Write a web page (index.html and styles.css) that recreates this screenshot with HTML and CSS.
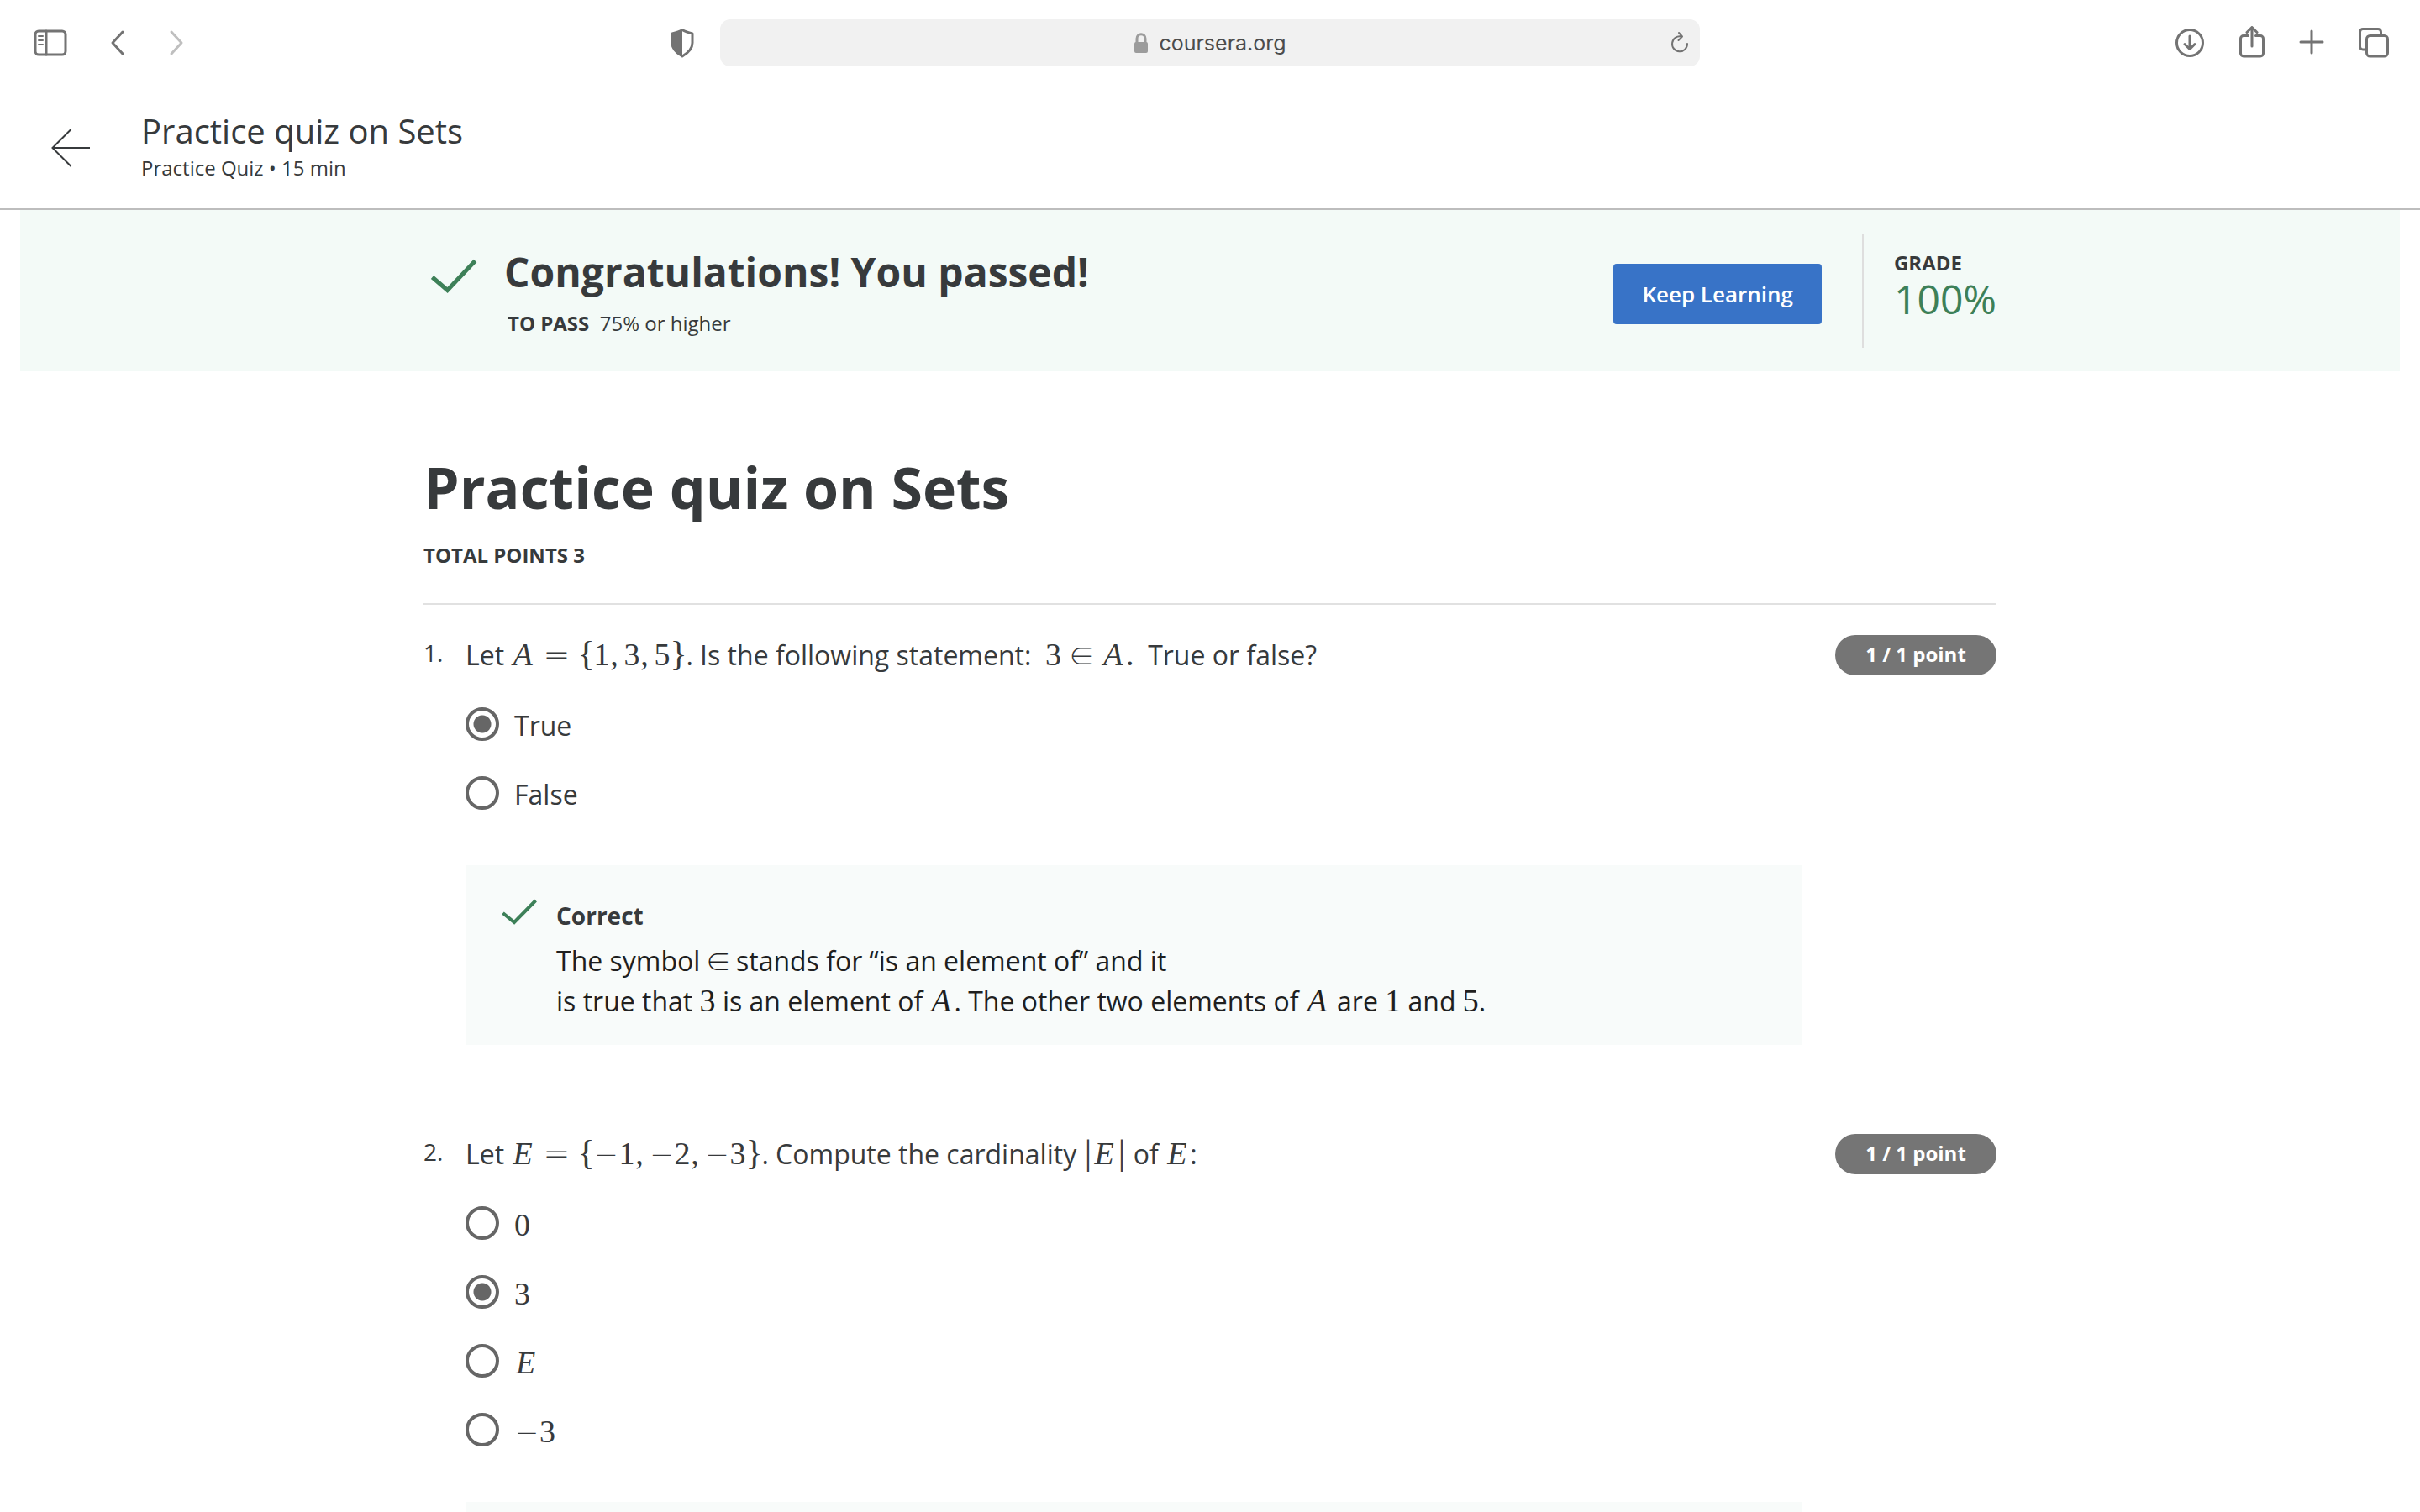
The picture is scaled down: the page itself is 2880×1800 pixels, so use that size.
FILE: index.html
```html
<!DOCTYPE html>
<html lang="en">
<head>
<meta charset="utf-8">
<title>Practice quiz on Sets</title>
<link rel="stylesheet" href="styles.css">
</head>
<body>
<div class="toolbar">
  <div class="tools tools-left">
    <button class="tool" aria-label="Sidebar"><svg width="40" height="32" viewBox="0 0 40 32"><rect x="2" y="2" width="36" height="28" rx="4"/><path d="M15 2v28"/><path class="thin" d="M6 8h5M6 13h5M6 18h5"/></svg></button>
    <button class="tool" aria-label="Back"><svg width="20" height="32" viewBox="0 0 20 32"><path d="M16 3L4 16l12 13"/></svg></button>
    <button class="tool" aria-label="Forward" disabled><svg width="20" height="32" viewBox="0 0 20 32"><path d="M4 3l12 13L4 29"/></svg></button>
    <button class="tool shield" aria-label="Privacy report"><svg width="30" height="36" viewBox="0 0 30 36"><path d="M15 2.500C11 5 7 6 3 7V18c0 7 5 12 12 16 7-4 12-9 12-16V7C23 6 19 5 15 2.500z"/><path class="solid" d="M15 2C11 5 7 6 2 7V18c0 7 5 12 13 16z"/></svg></button>
  </div>
  <div class="url">
    <div class="site"><svg class="lock" width="18" height="26" viewBox="0 0 18 26"><rect class="solid" x="1" y="12" width="16" height="13" rx="2"/><path d="M4 13V8c0-7 10-7 10 0v5"/></svg><span>coursera.org</span></div>
    <button class="tool" aria-label="Reload"><svg width="24" height="28" viewBox="0 0 24 28"><path class="thin" d="M14 6.500A9 9 0 1 0 21 15M11 2l4 4.500-4.500 4.500"/></svg></button>
  </div>
  <div class="tools tools-right">
    <button class="tool" aria-label="Downloads"><svg width="36" height="40" viewBox="0 0 36 40"><circle cx="18" cy="20" r="15.500"/><path d="M18 12v15M12 21.500l6 6 6-6"/></svg></button>
    <button class="tool" aria-label="Share"><svg width="32" height="40" viewBox="0 0 32 40"><path d="M11.500 11.500H6a3.500 3.500 0 0 0-3.500 3.500v17.500A3.500 3.500 0 0 0 6 36h20a3.500 3.500 0 0 0 3.500-3.500V15a3.500 3.500 0 0 0-3.500-3.500h-5.500M16 24V2M10 7.500l6-6 6 6"/></svg></button>
    <button class="tool" aria-label="New tab"><svg width="30" height="40" viewBox="0 0 30 40"><path d="M15 6v26M2 19h26"/></svg></button>
    <button class="tool" aria-label="Tab overview"><svg width="38" height="40" viewBox="0 0 38 40"><path d="M10 28H6a3.500 3.500 0 0 1-3.500-3.500V7A3.500 3.500 0 0 1 6 3.500h18A3.500 3.500 0 0 1 27.500 7v4"/><rect x="10.500" y="11.500" width="25" height="24.500" rx="4"/></svg></button>
  </div>
</div>

<header class="header">
  <a class="back" href="#" aria-label="Back to course"><svg width="48" height="48" viewBox="0 0 48 48"><path d="M24.500 2L2.500 24l22 22M2.500 24H47"/></svg></a>
  <div>
    <div class="header-title">Practice quiz on Sets</div>
    <div class="header-sub">Practice Quiz • 15 min</div>
  </div>
</header>

<section class="banner">
  <div class="banner-inner">
    <svg class="check" width="96" height="64" viewBox="0 0 96 64"><path d="M10.500 40L28.500 55.500 61.500 20.500"/></svg>
    <div class="message">
      <h2>Congratulations! You passed!</h2>
      <p><strong>TO PASS</strong>&nbsp; 75% or higher</p>
    </div>
    <button class="keep">Keep Learning</button>
    <div class="grade">
      <div class="grade-label">GRADE</div>
      <div class="grade-value">100%</div>
    </div>
  </div>
</section>

<main class="quiz">
  <div class="quiz-head">
    <h1>Practice quiz on Sets</h1>
    <div class="total">TOTAL POINTS 3</div>
  </div>

  <section class="question">
    <div class="number">1.</div>
    <div class="prompt">Let <span class="math"><i>A</i><b class="rel">=</b><span class="brace">{</span>1<span class="comma">,</span>3<span class="comma">,</span>5<span class="brace">}</span></span>. Is the following statement:&nbsp; <span class="math">3<b class="in rel-in">∈</b><i>A</i>.</span>&nbsp; True or false?</div>
    <div class="points">1 / 1 point</div>
    <div class="answers">
      <label class="option"><input type="radio" name="q1" checked><span>True</span></label>
      <label class="option"><input type="radio" name="q1"><span>False</span></label>
    </div>
    <div class="feedback">
      <svg class="check" width="44" height="36" viewBox="0 0 44 36"><path class="small" d="M2.500 17L16 28 41.500 2"/></svg>
      <div>
        <h3>Correct</h3>
        <p>The symbol <span class="math"><b class="in">∈</b></span> stands for “is an element of” and it<br>is true that <span class="math">3</span> is an element of <span class="math"><i>A</i></span>. The other two elements of <span class="math"><i>A</i></span> are <span class="math">1</span> and <span class="math">5</span>.</p>
      </div>
    </div>
  </section>

  <section class="question">
    <div class="number">2.</div>
    <div class="prompt">Let <span class="math"><i>E</i><b class="rel">=</b><span class="brace">{</span><b>−</b>1<span class="comma">,</span><b>−</b>2<span class="comma">,</span><b>−</b>3<span class="brace">}</span></span>. Compute the cardinality <span class="math"><span class="bar">|</span><i>E</i><span class="bar">|</span></span> of <span class="math"><i>E</i></span>:</div>
    <div class="points">1 / 1 point</div>
    <div class="answers">
      <label class="option"><input type="radio" name="q2"><span class="math">0</span></label>
      <label class="option"><input type="radio" name="q2" checked><span class="math">3</span></label>
      <label class="option"><input type="radio" name="q2"><span class="math"><i>E</i></span></label>
      <label class="option"><input type="radio" name="q2"><span class="math"><b>−</b>3</span></label>
    </div>
    <div class="feedback"></div>
  </section>
</main>
</body>
</html>
```
FILE: styles.css
```css
* { box-sizing: border-box; }
body {
  margin: 0;
  height: 100vh;
  overflow: hidden;
  background: #fff;
  color: #373a3c;
  font-family: "Open Sans", sans-serif;
  font-size: 32px;
  line-height: 48px;
}
h1, h2, h3, p { margin: 0; }
button { font: inherit; border: 0; cursor: pointer; }

/* Browser toolbar */
.toolbar {
  display: grid;
  grid-template-columns: 1fr 1166px 1fr;
  align-items: center;
  height: 102px;
  padding: 0 36px;
}
.tool { display: flex; padding: 0; background: none; color: #737373; }
.tool:disabled { color: #bfbfbf; }
.toolbar svg {
  fill: none;
  stroke: currentColor;
  stroke-width: 3;
  stroke-linecap: round;
  stroke-linejoin: round;
}
.toolbar .solid { fill: currentColor; stroke: none; }
.toolbar .thin { stroke-width: 2; }
.tools { display: flex; align-items: center; }
.tools-left { gap: 50px; padding-left: 4px; }
.tools-right { justify-content: flex-end; gap: 40px; }
.shield { margin: 0 30px 0 auto; }
.url {
  display: flex;
  align-items: center;
  height: 56px;
  padding-right: 12px;
  border-radius: 12px;
  background: #f1f1f1;
}
.site {
  flex: 1;
  display: flex;
  align-items: center;
  justify-content: center;
  gap: 12px;
  padding-left: 36px;
  color: #4c4c4c;
  font: 25px/32px Inter, sans-serif;
}
.lock { color: #9c9c9c; }

/* Course header */
.header {
  display: flex;
  align-items: center;
  gap: 60px;
  padding: 28px 60px 30px;
  border-bottom: 2px solid #bdbdbd;
}
.back { display: flex; padding-top: 4px; }
.back svg { fill: none; stroke: #373a3c; stroke-width: 2; }
.header-title { font-size: 40px; line-height: 52px; }
.header-sub { font-size: 24px; line-height: 36px; }

/* Result banner */
.banner { margin: 0 24px; padding: 28px 0; background: #f3faf7; }
.banner-inner, .quiz { max-width: 1872px; margin: 0 auto; }
.banner-inner { display: flex; align-items: flex-start; }
.check { flex: none; fill: none; stroke: #3d8058; stroke-width: 5; }
.check .small { stroke-width: 4; }
.banner-inner .check { margin-top: 12px; }
.message { flex: 1; padding-top: 14px; }
.message h2 { font-size: 48px; line-height: 64px; }
.message p { padding: 11px 0 0 4px; font-size: 24px; line-height: 36px; }
.keep {
  height: 72px;
  margin: 36px 48px 0 0;
  padding: 0 34px;
  border-radius: 4px;
  background: #3873c7;
  color: #fff;
  font-size: 26px;
  font-weight: 600;
}
.grade {
  height: 136px;
  padding: 20px 0 0 36px;
  border-left: 2px solid #dedede;
}
.grade-label { font-size: 24px; font-weight: 700; line-height: 30px; }
.grade-value { color: #3d8058; font-size: 48px; line-height: 56px; }

/* Quiz */
.quiz-head { padding: 90px 0 39px; border-bottom: 2px solid #e1e1e1; }
h1 { font-size: 68px; line-height: 96px; }
.total { padding-top: 15px; font-size: 24px; font-weight: 700; line-height: 36px; }
.question {
  display: grid;
  grid-template-columns: 50px 1fr auto;
  padding: 36px 0 70px;
}
.number { font-size: 28px; line-height: 42px; }
.points {
  width: 192px;
  height: 48px;
  border-radius: 24px;
  background: #757575;
  color: #fff;
  font-size: 24px;
  font-weight: 700;
  line-height: 46px;
  text-align: center;
}
.answers {
  grid-column: 2;
  display: flex;
  flex-direction: column;
  gap: 38px;
  padding-top: 38px;
}
.option, .option .math { line-height: 44px; }
.option { display: flex; gap: 18px; height: 44px; }
input[type="radio"] {
  appearance: none;
  flex: none;
  width: 40px;
  height: 40px;
  margin: 0;
  border: 4px solid #666;
  border-radius: 50%;
}
input[type="radio"]:checked {
  background: radial-gradient(circle, #666 10px, transparent 11px);
}
.feedback {
  grid-column: 2 / 4;
  display: flex;
  gap: 22px;
  min-height: 214px;
  margin: 62px 231px 0 0;
  padding: 40px 42px 28px;
  background: #f8fbfa;
}
.feedback h3 { font-size: 28px; line-height: 40px; }
.feedback p { padding-top: 10px; color: #1f1f1f; }

/* Inline mathematics */
.math {
  font-family: "Liberation Serif", serif;
  font-size: 38px;
  line-height: 30px;
  white-space: nowrap;
}
.math i, .math b { display: inline-block; width: 29px; line-height: 30px; }
.math i { padding-left: 2px; }
.math b {
  width: 30px;
  font-family: "DejaVu Sans", sans-serif;
  font-size: 34px;
  font-weight: 200;
  text-align: center;
}
.math .rel { width: 32px; margin: 0 9px; font-size: 38px; }
.math .in {
  width: 30px;
  margin: 0 -2px;
  font-family: "Noto Sans CJK JP", sans-serif;
  font-size: 30px;
  font-weight: 300;
}
.math .rel-in { margin: 0 9px; }
.brace, .bar, .comma { display: inline-block; text-align: center; }
.brace, .bar { font-size: 42px; }
.brace { width: 19px; }
.bar { width: 11px; }
.comma { width: 11px; margin-right: 6px; }
```
